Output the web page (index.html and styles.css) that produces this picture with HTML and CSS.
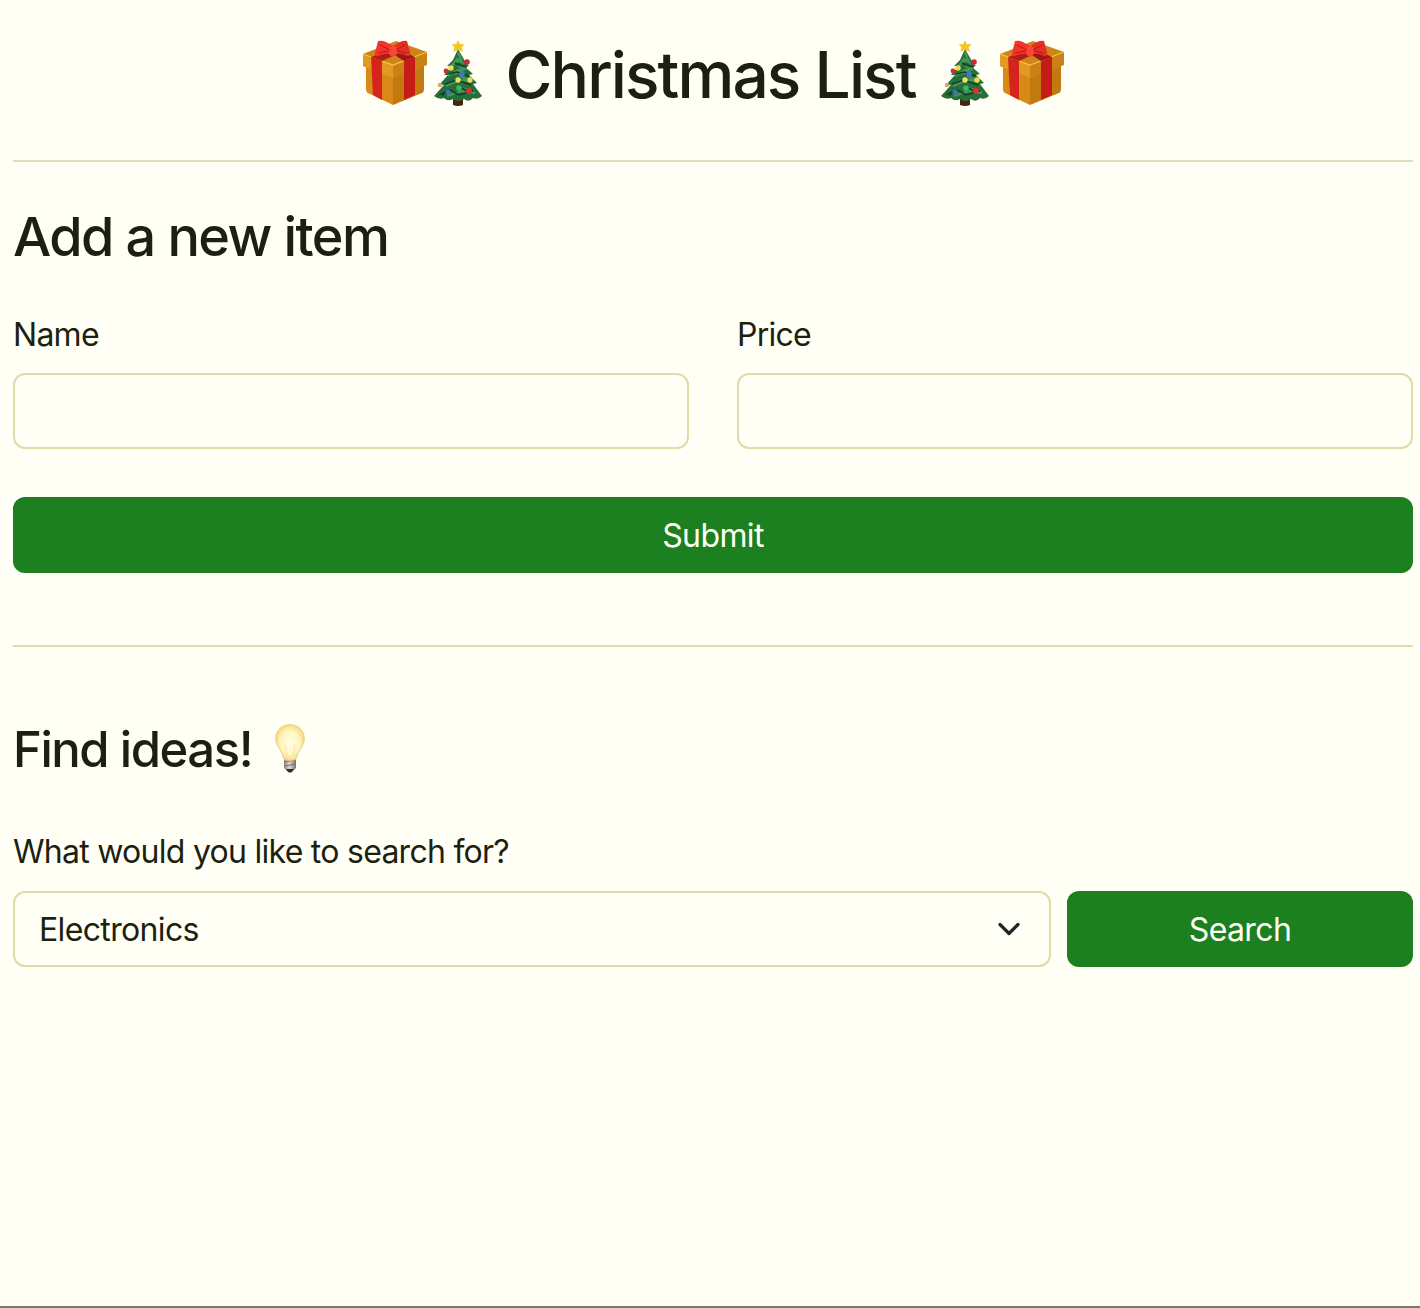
FILE: index.html
```html
<!DOCTYPE html>
<html lang="en">
<head>
<meta charset="utf-8">
<title>Christmas List</title>
<link rel="stylesheet" href="styles.css">
</head>
<body>
<svg class="defs" aria-hidden="true">
  <defs>
    <symbol id="gift" viewBox="0 0 66 66">
      <path d="M4 24 31 36V65L6 53Q4 52 4 49Z" fill="#d98a16"/>
      <path d="M31 36 62 24V49Q62 52 60 53L31 65Z" fill="#c27a10"/>
      <path d="M1 14 34 1 65 12V24L31 38 1 26Z" fill="#cf8419"/>
      <path d="M1 14 31 25V38L1 26Z" fill="#e39a22"/>
      <path d="M31 25 65 12V25L31 38Z" fill="#cb8214"/>
      <path d="M1 14 31 25 65 12" fill="none" stroke="#f7c23c" stroke-width="1.3"/>
      <path d="M9 17 20 21V60L11 55Z" fill="#d4241c"/>
      <path d="M9 17 33 8 44 10 20 21Z" fill="#b41c18"/>
      <path d="M42 21 53 17V55L42 60Z" fill="#c51c18"/>
      <path d="M25 10 34 8 53 17 42 21Z" fill="#9d1714"/>
      <path d="M16 1Q20 0 24 2L31 6V14Q22 13 16 16Q12 17 13 13Z" fill="#ef352c"/>
      <path d="M45 1Q42 0 38 2L31 6V14Q39 13 45 16Q49 17 48 12Z" fill="#e52e25"/>
      <ellipse cx="31" cy="11" rx="4.500" ry="5.500" fill="#fa4638"/>
      <path d="m18 5 10 5m-12 3 11-2m16-6-9 5m11 3-10-2" stroke="#b81a16" stroke-width="1" fill="none"/>
    </symbol>
    <symbol id="tree" viewBox="0 0 50 66">
      <path d="M20 52h10v12q-5 2-10 0Z" fill="#482414"/>
      <path d="M25 8 33 22 36 25 32 26 40 33 36 34 44 42 40 43 49 55Q45 59 40 57Q36 62 31 58Q25 62 20 58Q15 61 11 57Q6 59 1 55L11 44 6 44 15 34 11 34 19 25 14 25 20 19Z" fill="#257039"/>
      <path d="m25 11 4 10-5-3-5 7m6 0 8 3-8 1-10 6m12 0 11 5-11-1-14 6m14 1 15 6-13-2-15 5m-8-1 13-4m3-28 5-3m3 11-9 3" fill="none" stroke="#45965a" stroke-width="2.3"/>
      <path d="m22 22 7 3 5 1m-18 7 8-2 12 4M12 43l12-4 14 5M6 54l11-5 9 5 14-4m-14-5 9 6M15 49l-6 6" fill="none" stroke="#123f25" stroke-width="1.6"/>
      <path d="m25 0 1.8 3.500 4-.1-2.500 3 1.300 3.800L25 8.500l-4.200 1.700 1-3.800-2.500-3 4 .1Z" fill="#f5c523" stroke="#f5c523" stroke-width=".7"/>
      <circle cx="34" cy="21" r="2.8" fill="#ce2938"/><circle cx="13" cy="30" r="2.4" fill="#c82e32"/>
      <circle cx="18" cy="27" r="2.7" fill="#f0dc54"/><circle cx="29" cy="33" r="2.8" fill="#3b79c7"/>
      <circle cx="25" cy="39" r="2.7" fill="#f1dc6b"/><circle cx="37" cy="39" r="2.7" fill="#f2d84f"/>
      <circle cx="7" cy="44" r="2.3" fill="#dfa36b"/><circle cx="26" cy="47" r="2.8" fill="#39b965"/>
      <circle cx="36" cy="50" r="3" fill="#dc3039"/><circle cx="15" cy="51" r="2.5" fill="#3974bc"/>
    </symbol>
    <radialGradient id="glass"><stop offset="0" stop-color="#fffde8"/><stop offset=".65" stop-color="#fff6c0"/><stop offset="1" stop-color="#f6d985"/></radialGradient>
    <linearGradient id="metal"><stop offset="0" stop-color="#88847d"/><stop offset=".45" stop-color="#dcdad2"/><stop offset="1" stop-color="#777169"/></linearGradient>
  </defs>
</svg>
<main class="page">
  <h1 class="title">
    <svg class="gift"><use href="#gift"/></svg><svg class="tree"><use href="#tree"/></svg><span class="title-text">Christmas List</span><svg class="tree"><use href="#tree"/></svg><svg class="gift gift-end"><use href="#gift"/></svg>
  </h1>
  <hr class="rule">
  <h2 class="heading">Add a new item</h2>
  <form class="item-form">
    <div class="field"><label class="label" for="name">Name</label><input class="input" id="name" type="text"></div>
    <div class="field"><label class="label" for="price">Price</label><input class="input" id="price" type="text"></div>
    <button class="button submit" type="button">Submit</button>
  </form>
  <hr class="rule rule-ideas">
  <h3 class="ideas"><span class="ideas-text">Find ideas!</span>
    <svg class="bulb" viewBox="0 0 30 50">
      <path d="M9 34h12v10l-3 3q-3 2-6 0l-3-3Z" fill="url(#metal)"/>
      <path d="m9 38 12-2m-12 6 12-2" stroke="#77736c" stroke-width="1"/>
      <path d="M11 45h8l-2 3q-2 1-4 0Z" fill="#302e29"/>
      <path d="M15 .7C6.500.7.7 6.600.7 14.500c0 6.500 3.500 9.500 6 14.200 1.600 3 1.300 5.800 3 7q5.300 1.800 10.600 0c1.700-1.200 1.400-4 3-7 2.500-4.700 6-7.700 6-14.200C29.300 6.600 23.500.7 15 .7Z" fill="url(#glass)" stroke="#e9c67a" stroke-width=".8"/>
      <path d="M12 34 10 21m10 0-2 13" fill="none" stroke="#f5e4a0" stroke-width="1"/>
    </svg>
  </h3>
  <label class="label search-label" for="category">What would you like to search for?</label>
  <div class="search">
    <div class="select" id="category" role="combobox" tabindex="0"><span class="select-text">Electronics</span>
      <svg class="chevron" viewBox="0 0 32 32"><path d="m7 11.500 9 9 9-9" fill="none" stroke="#212529" stroke-width="3.200" stroke-linecap="round" stroke-linejoin="round"/></svg>
    </div>
    <button class="button" type="button">Search</button>
  </div>
</main>
</body>
</html>
```
FILE: styles.css
```css
* { box-sizing: border-box; }
body {
  margin: 0;
  background: #fffff5;
  color: #1d1f10;
  font: 400 32px/48px Inter, "Liberation Sans", sans-serif;
}
.defs { position: absolute; width: 0; height: 0; }
.page {
  height: 1308px;
  padding: 38px 7px 0 13px;
  border-bottom: 2px solid #777969;
}
.title {
  display: flex;
  justify-content: center;
  align-items: center;
  height: 74px;
  margin: 0;
  font-size: 64px;
  font-weight: 550;
  line-height: 74px;
}
.gift { flex: none; width: 66px; height: 66px; margin: -5px 5px 0 0; }
.gift-end { margin: -5px 0 0 9px; }
.tree { flex: none; width: 50px; height: 66px; margin-top: -3px; }
.title-text { width: 413px; margin: 0 21px 0 23px; letter-spacing: -1.9px; white-space: nowrap; }
.rule { height: 2px; margin: 48px 0 0; border: 0; background: #dcdec0; }
.heading { height: 62px; margin: 44px 0 0; font-size: 54px; font-weight: 550; line-height: 61px; letter-spacing: -1.6px; }
.item-form { display: grid; grid-template-columns: 1fr 1fr; gap: 48px; margin-top: 43px; }
.field { display: flex; flex-direction: column; gap: 14px; }
.label { display: block; letter-spacing: -0.73px; }
.input, .select {
  width: 100%;
  height: 76px;
  border: 2px solid #dcdda8;
  border-radius: 12px;
  background: transparent;
}
.button {
  height: 76px;
  padding: 2px 0 0;
  border: 0;
  border-radius: 12px;
  background: #1c7f20;
  color: #fffff5;
  font: inherit;
  letter-spacing: -0.6px;
}
.submit { grid-column: span 2; }
.rule-ideas { margin-top: 72px; background: #dddfa9; }
.ideas { display: flex; align-items: center; height: 58px; margin: 74px 0 0; font-size: 49px; font-weight: 550; line-height: 58px; letter-spacing: -1.45px; }
.ideas-text { width: 262px; }
.bulb { width: 30px; height: 50px; margin-top: -3px; }
.search-label { margin-top: 49px; }
.search { display: grid; grid-template-columns: 1038px 1fr; gap: 16px; margin-top: 15px; }
.select { display: flex; align-items: center; justify-content: space-between; padding: 0 24px; letter-spacing: -0.65px; }
.select-text { padding-top: 2px; }
.chevron { width: 32px; height: 32px; }
```
